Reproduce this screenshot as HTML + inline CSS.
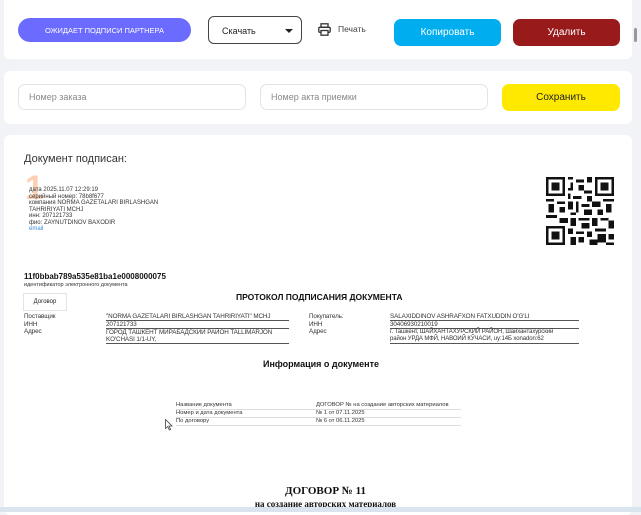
<!DOCTYPE html>
<html><head><meta charset="utf-8"><style>
*{margin:0;padding:0;box-sizing:border-box}
body{width:641px;height:512px;overflow:hidden;background:#f2f3f6;font-family:"Liberation Sans",sans-serif;position:relative;color:#222}
.a{position:absolute}
.card{position:absolute;left:4px;width:628px;background:#fff;border-radius:6px}
.btn{position:absolute;border-radius:7px;color:#fff;font-size:10px;display:flex;align-items:center;justify-content:center}
.inp{position:absolute;border:1px solid #e3e3e6;border-radius:7px;font-size:9px;color:#888;padding-left:10px;display:flex;align-items:center}
.s{font-size:6px;line-height:6.5px;color:#333}
.t{font-size:6.3px;color:#333;white-space:nowrap;letter-spacing:-0.1px}
.ul{border-bottom:1px solid #555}
</style></head><body>
<div class="card" style="top:0;height:59px;border-radius:0 0 6px 6px"></div>
<div class="btn" style="left:18px;top:18px;width:173px;height:24px;border-radius:12px;background:#6b6bff;font-size:7.5px">ОЖИДАЕТ ПОДПИСИ ПАРТНЕРА</div>
<div class="a" style="left:208px;top:16px;width:94px;height:28px;border:1px solid #444;border-radius:6px;font-size:9px;padding:9px 0 0 13px">Скачать<span class="a" style="right:8px;top:12px;width:0;height:0;border-left:4px solid transparent;border-right:4px solid transparent;border-top:4px solid #222"></span></div>
<svg class="a" style="left:318px;top:23px" width="13" height="13" viewBox="0 0 13 13"><rect x="3" y="0.8" width="7" height="3.5" fill="none" stroke="#333" stroke-width="1.3"/><rect x="0.8" y="4.3" width="11.4" height="5" rx="1" fill="none" stroke="#333" stroke-width="1.3"/><rect x="3" y="7.5" width="7" height="4.7" fill="#fff" stroke="#333" stroke-width="1.3"/></svg>
<div class="a" style="left:338px;top:24px;font-size:8.5px;color:#444">Печать</div>
<div class="btn" style="left:394px;top:19px;width:107px;height:27px;background:#00adef">Копировать</div>
<div class="btn" style="left:513px;top:19px;width:107px;height:27px;background:#981a1b">Удалить</div>
<div class="a" style="left:634px;top:28px;width:3px;height:14px;background:#999;border-radius:2px"></div>

<div class="card" style="top:71px;height:53px"></div>
<div class="inp" style="left:18px;top:84px;width:228px;height:26px">Номер заказа</div>
<div class="inp" style="left:260px;top:84px;width:228px;height:26px">Номер акта приемки</div>
<div class="btn" style="left:502px;top:84px;width:118px;height:27px;background:#ffe900;color:#222">Сохранить</div>

<div class="card" style="top:135px;height:380px"></div>
<div class="a" style="left:24px;top:153px;font-size:11px;color:#333">Документ подписан:</div>
<div class="a" style="left:25px;top:170px;font-size:34px;font-weight:bold;color:#fbd0b3;line-height:36px">1</div>
<div class="a s" style="left:29px;top:187px">дата 2025.11.07 12:29:19<br>серийный номер: 78b8f677<br>компания NORMA GAZETALARI BIRLASHGAN<br>TAHRIRIYATI MCHJ<br>инн: 207121733<br>фио: ZAYNUTDINOV BAXODIR<br><span style="color:#3a8be0">email</span></div>
<svg class="a" style="left:546px;top:177px" width="68" height="68" viewBox="0 0 25 25" shape-rendering="crispEdges">
<g fill="#111"><path d="M0 0h7v7h-7zM18 0h7v7h-7zM0 18h7v7h-7z"/></g>
<g fill="#fff"><path d="M1 1h5v5h-5zM19 1h5v5h-5zM1 19h5v5h-5z"/></g>
<g fill="#111"><path d="M2 2h3v3h-3zM20 2h3v3h-3zM2 20h3v3h-3z"/>
<path d="M8 0h2v1h-2zM11 1h3v1h-3zM9 2h1v3h-1zM12 3h2v2h-2zM15 0h2v2h-2zM14 5h3v1h-3zM8 6h1v2h-1zM10 7h3v1h-3zM15 7h2v2h-2zM0 8h3v1h-3zM4 9h3v1h-3zM1 10h2v3h-2zM5 11h2v2h-2zM8 9h2v3h-2zM11 9h1v4h-1zM13 10h3v1h-3zM17 9h3v2h-3zM21 8h4v1h-4zM22 10h2v3h-2zM19 12h2v2h-2zM14 12h3v2h-3zM9 13h2v1h-2zM0 14h4v1h-4zM5 15h3v2h-3zM9 15h2v3h-2zM12 15h4v1h-4zM17 15h2v3h-2zM20 15h3v1h-3zM23 16h2v3h-2zM13 17h3v2h-3zM8 19h2v2h-2zM11 20h3v1h-3zM15 20h2v2h-2zM18 19h4v1h-4zM19 21h3v3h-3zM23 21h2v2h-2zM9 22h2v3h-2zM12 22h2v2h-2zM16 23h3v2h-3zM22 24h3v1h-3zM8 4h1v1h-1z"/></g>
</svg>

<div class="a" style="left:24px;top:272px;font-size:8px;font-weight:bold;color:#111">11f0bbab789a535e81ba1e0008000075</div>
<div class="a" style="left:24px;top:282px;font-size:5.5px;color:#333">идентификатор электронного документа</div>
<div class="a" style="left:23px;top:293px;width:44px;height:18px;border:1px solid #e3e3e3;font-size:6px;display:flex;align-items:center;justify-content:center">Договор</div>
<div class="a" style="left:236px;top:292px;font-size:8.5px;font-weight:bold;color:#111">ПРОТОКОЛ ПОДПИСАНИЯ ДОКУМЕНТА</div>
<div class="a t" style="left:24px;top:313px;line-height:7.5px">Поставщик<br>ИНН<br>Адрес</div>
<div class="a t ul" style="left:106px;top:313px;width:183px;height:8px;line-height:7.5px">"NORMA GAZETALARI BIRLASHGAN TAHRIRIYATI" MCHJ</div>
<div class="a t ul" style="left:106px;top:321px;width:183px;height:8px;line-height:7.5px">207121733</div>
<div class="a t ul" style="left:106px;top:329px;width:183px;height:15px;line-height:7.2px">ГОРОД ТАШКЕНТ МИРАБАДСКИЙ РАЙОН TALLIMARJON<br>KO'CHASI 1/1-UY,</div>
<div class="a t" style="left:309px;top:313px;line-height:7.5px">Покупатель:<br>ИНН<br>Адрес</div>
<div class="a t ul" style="left:390px;top:313px;width:189px;height:8px;line-height:7.5px">SALAXIDDINOV ASHRAFXON FATXUDDIN O'G'LI</div>
<div class="a t ul" style="left:390px;top:321px;width:189px;height:8px;line-height:7.5px">30406930210019</div>
<div class="a t ul" style="left:390px;top:329px;width:189px;height:15px;line-height:7.2px;font-size:6px">г. Ташкент, ШАЙХАНТАХУРСКИЙ РАЙОН, Шайхантахурский<br>район УРДА МФЙ, НАВОИЙ КЎЧАСИ, uy:14Б xonadon:62</div>
<div class="a" style="left:263px;top:359px;font-size:9px;font-weight:bold;color:#111">Информация о документе</div>
<div class="a" style="left:176px;top:402px;width:285px;font-size:5.8px;color:#333">
<div style="height:8px;border-bottom:1px solid #ddd;position:relative">Название документа<span class="a" style="left:140px">ДОГОВОР № на создание авторских материалов</span></div>
<div style="height:8px;border-bottom:1px solid #ddd;position:relative">Номер и дата документа<span class="a" style="left:140px">№ 1 от 07.11.2025</span></div>
<div style="height:8px;border-bottom:1px solid #ddd;position:relative">По договору<span class="a" style="left:140px">№ 6 от 06.11.2025</span></div>
</div>
<svg class="a" style="left:165px;top:419px" width="8" height="12" viewBox="0 0 8 12"><path d="M0.5 0.5v9l2.2-2 1.6 3.5 1.3-.6-1.6-3.4h3z" fill="#fff" stroke="#444" stroke-width="0.8"/></svg>
<div class="a" style="left:0;width:641px;text-align:center;top:485px;font-family:'Liberation Serif',serif;font-weight:bold;font-size:11px;color:#111;padding-left:10px">ДОГОВОР № 11</div>
<div class="a" style="left:0;width:641px;text-align:center;top:499px;font-family:'Liberation Serif',serif;font-weight:bold;font-size:9px;color:#111;padding-left:10px">на создание авторских материалов</div>
<div class="a" style="left:0;top:507px;width:641px;height:5px;background:#d9e4ef"></div>
</body></html>
